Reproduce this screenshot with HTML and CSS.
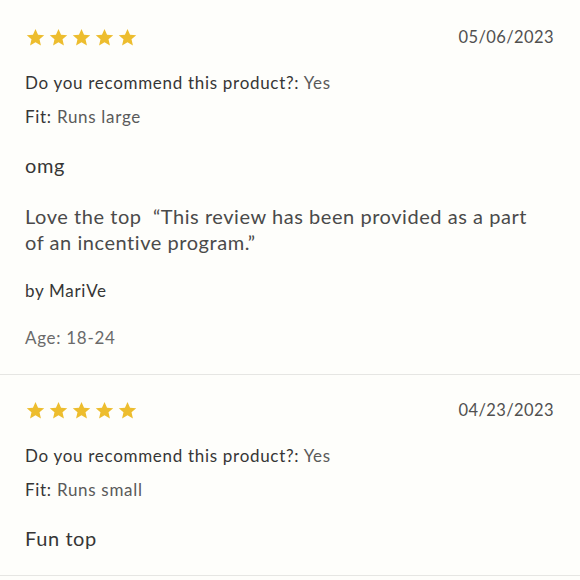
FILE: index.html
```html
<!DOCTYPE html>
<html lang="en">
<head>
<meta charset="utf-8">
<link rel="stylesheet" href="styles.css">
</head>
<body>
<div class="reviews">
  <article class="review">
    <div class="head">
      <div class="stars">
        <svg viewBox="0 0 24 24"><path d="M12 2.2l2.9 6.6 7.1.6-5.4 4.7 1.6 7-6.2-3.7-6.2 3.7 1.6-7L2 9.4l7.1-.6z"/></svg>
        <svg viewBox="0 0 24 24"><path d="M12 2.2l2.9 6.6 7.1.6-5.4 4.7 1.6 7-6.2-3.7-6.2 3.7 1.6-7L2 9.4l7.1-.6z"/></svg>
        <svg viewBox="0 0 24 24"><path d="M12 2.2l2.9 6.6 7.1.6-5.4 4.7 1.6 7-6.2-3.7-6.2 3.7 1.6-7L2 9.4l7.1-.6z"/></svg>
        <svg viewBox="0 0 24 24"><path d="M12 2.2l2.9 6.6 7.1.6-5.4 4.7 1.6 7-6.2-3.7-6.2 3.7 1.6-7L2 9.4l7.1-.6z"/></svg>
        <svg viewBox="0 0 24 24"><path d="M12 2.2l2.9 6.6 7.1.6-5.4 4.7 1.6 7-6.2-3.7-6.2 3.7 1.6-7L2 9.4l7.1-.6z"/></svg>
      </div>
      <div class="date">05/06/2023</div>
    </div>
    <p class="attr rec"><span class="label">Do you recommend this product?:</span> <span class="val">Yes</span></p>
    <p class="attr fit"><span class="label">Fit:</span> <span class="val">Runs large</span></p>
    <h3 class="title">omg</h3>
    <p class="body">Love the top &nbsp;“This review has been provided as a part of an incentive program.”</p>
    <p class="author">by MariVe</p>
    <p class="age">Age: 18-24</p>
  </article>
  <article class="review">
    <div class="head">
      <div class="stars">
        <svg viewBox="0 0 24 24"><path d="M12 2.2l2.9 6.6 7.1.6-5.4 4.7 1.6 7-6.2-3.7-6.2 3.7 1.6-7L2 9.4l7.1-.6z"/></svg>
        <svg viewBox="0 0 24 24"><path d="M12 2.2l2.9 6.6 7.1.6-5.4 4.7 1.6 7-6.2-3.7-6.2 3.7 1.6-7L2 9.4l7.1-.6z"/></svg>
        <svg viewBox="0 0 24 24"><path d="M12 2.2l2.9 6.6 7.1.6-5.4 4.7 1.6 7-6.2-3.7-6.2 3.7 1.6-7L2 9.4l7.1-.6z"/></svg>
        <svg viewBox="0 0 24 24"><path d="M12 2.2l2.9 6.6 7.1.6-5.4 4.7 1.6 7-6.2-3.7-6.2 3.7 1.6-7L2 9.4l7.1-.6z"/></svg>
        <svg viewBox="0 0 24 24"><path d="M12 2.2l2.9 6.6 7.1.6-5.4 4.7 1.6 7-6.2-3.7-6.2 3.7 1.6-7L2 9.4l7.1-.6z"/></svg>
      </div>
      <div class="date">04/23/2023</div>
    </div>
    <p class="attr rec"><span class="label">Do you recommend this product?:</span> <span class="val">Yes</span></p>
    <p class="attr fit"><span class="label">Fit:</span> <span class="val">Runs small</span></p>
    <h3 class="title">Fun top</h3>
  </article>
</div>
</body>
</html>
```
FILE: styles.css
```css
html, body {
  margin: 0;
  padding: 0;
  background: #fefefb;
}
body {
  font-family: "Lato", "Liberation Sans", sans-serif;
  color: #333;
  width: 580px;
  height: 580px;
  overflow: hidden;
}
.review {
  padding: 25px 26px 24px 25px;
  border-bottom: 1px solid #e6e6e3;
}
.review + .review {
  padding-top: 23px;
}
.head {
  display: flex;
  justify-content: space-between;
  align-items: center;
  height: 24px;
}
.stars {
  display: flex;
  gap: 2px;
}
.stars svg {
  width: 21px;
  height: 21px;
  fill: #edbd2e;
}
.date {
  font-size: 16.5px;
  letter-spacing: 0.4px;
  color: #505050;
}
p, h3 {
  margin: 0;
}
.attr {
  font-size: 17px;
  line-height: 24px;
  letter-spacing: 0.7px;
}
.rec {
  margin-top: 22px;
}
.fit {
  margin-top: 10px;
}
.label {
  color: #363636;
}
.val {
  color: #5a5a5a;
}
.title {
  font-weight: normal;
  font-size: 20px;
  line-height: 26px;
  letter-spacing: 0.6px;
  color: #363636;
  margin-top: 23px;
}
.body {
  font-size: 20px;
  line-height: 26px;
  letter-spacing: 0.55px;
  color: #4a4a4a;
  margin-top: 25px;
  padding-right: 4px;
}
.author {
  font-size: 17px;
  line-height: 24px;
  letter-spacing: 0.7px;
  color: #363636;
  margin-top: 24px;
}
.age {
  font-size: 17px;
  line-height: 24px;
  letter-spacing: 0.7px;
  color: #6a6a6a;
  margin-top: 23px;
}
```
